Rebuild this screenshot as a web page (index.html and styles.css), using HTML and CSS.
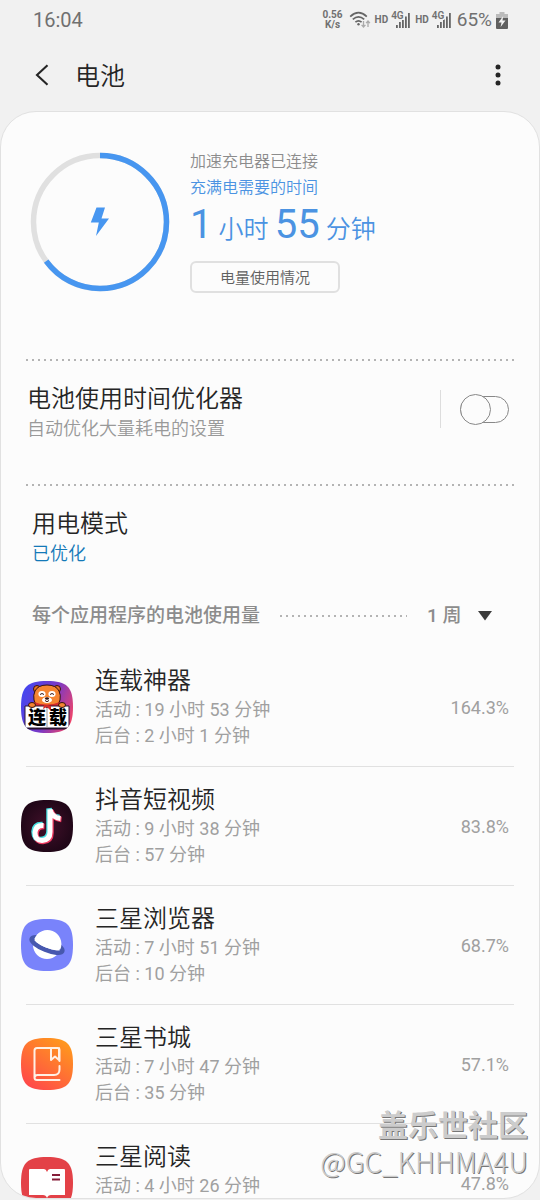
FILE: index.html
```html
<!DOCTYPE html>
<html lang="zh-CN">
<head>
<meta charset="utf-8">
<meta name="viewport" content="width=device-width, initial-scale=1">
<title>电池</title>
<link rel="stylesheet" href="styles.css">
</head>
<body>
<div class="status-bar">
  <time class="clock">16:04</time>
  <div class="status-icons">
    <span class="speed"><span>0.56</span><span>K/s</span></span>
    <svg class="wifi" width="22" height="18" viewBox="0 0 22 18" fill="none" stroke="#666" stroke-width="1.7">
      <path d="M1.2 5.6Q9.5-2.2 17.8 5.6M3.8 8.4Q9.5 3.2 15.2 8.4M6.4 11.2Q9.5 8.4 12.6 11.2"/>
      <circle cx="9.5" cy="13.3" r="1.2" fill="#666" stroke="none"/>
      <path d="M14.5 10v6M12.6 13.8l1.9 2.2 1.9-2.2M19 16v-6M17.1 12.2 19 10l1.9 2.2" stroke="#aaa" stroke-width="1.3"/>
    </svg>
    <span class="hd">HD</span>
    <span class="cell"><span class="net">4G</span>
      <svg width="14" height="15" viewBox="0 0 14 15" fill="#666"><path d="M0 12h1.8v3H0zM3 9h1.8v6H3zM6 6.5h1.8V15H6zM9 3.5h1.8V15H9zM12 0h1.8v15H12z"/></svg></span>
    <span class="hd">HD</span>
    <span class="cell"><span class="net">4G</span>
      <svg width="14" height="15" viewBox="0 0 14 15" fill="#666"><path d="M0 12h1.8v3H0zM3 9h1.8v6H3zM6 6.5h1.8V15H6zM9 3.5h1.8V15H9zM12 0h1.8v15H12z"/></svg></span>
    <span class="charge">65%</span>
    <svg class="battery" width="12" height="17" viewBox="0 0 12 17">
      <path d="M3.500 0h5v2H12v5H0V2h3.500z" fill="#bbb"/><path d="M0 6h12v10q0 1-1 1H1q-1 0-1-1z" fill="#606060"/>
      <path d="M7.200 4 2.500 10.500h3L4.600 15 9.500 8.500h-3z" fill="#f3f3f3"/>
    </svg>
  </div>
</div>
<header class="title-bar">
  <button class="icon-button" type="button" aria-label="返回">
    <svg width="14" height="22" viewBox="0 0 14 22" fill="none" stroke="#252525" stroke-width="2.100"><path d="M12.500 1.200 2 11l10.500 9.800"/></svg>
  </button>
  <h1>电池</h1>
  <button class="icon-button more" type="button" aria-label="更多选项">
    <svg width="6" height="22" viewBox="0 0 6 22" fill="#252525"><circle cx="3" cy="3" r="2.500"/><circle cx="3" cy="11" r="2.500"/><circle cx="3" cy="19" r="2.500"/></svg>
  </button>
</header>
<main class="card">
  <section class="summary">
    <svg class="gauge" width="140" height="140" viewBox="0 0 140 140" fill="none">
      <circle cx="70" cy="70" r="66.500" stroke="#e0e0e0" stroke-width="5.500"/>
      <circle cx="70" cy="70" r="66.500" stroke="#4796f0" stroke-width="5.500" pathLength="100" stroke-dasharray="65 35" transform="rotate(-90 70 70)"/>
      <path d="M66.500 55.500h8.500l-3.500 11h7.500L66 84l2.800-13.500h-8z" fill="#4796f0"/>
    </svg>
    <div class="summary-text">
      <p class="charger">加速充电器已连接</p>
      <p class="until">充满电需要的时间</p>
      <p class="remaining"><b>1</b> 小时 <b>55</b> 分钟</p>
      <button class="usage-button" type="button">电量使用情况</button>
    </div>
  </section>
  <section class="optimizer dotted-top">
    <label class="optimizer-label" for="optimizer">
      <span class="item-title">电池使用时间优化器</span>
      <span class="item-sub">自动优化大量耗电的设置</span>
    </label>
    <div class="switch-box"><input class="switch" id="optimizer" type="checkbox" role="switch"></div>
  </section>
  <section class="mode dotted-top">
    <h2 class="item-title">用电模式</h2>
    <p class="item-sub mode-value">已优化</p>
  </section>
  <div class="usage-head">
    <label for="period">每个应用程序的电池使用量</label>
    <span class="leader"></span>
    <span class="period">
      <select id="period"><option>1 周</option></select>
      <svg width="14" height="10" viewBox="0 0 14 10"><path d="M0 0h14L7 9.500z" fill="#3c3c3c"/></svg>
    </span>
  </div>
  <ul class="apps">
    <li class="app">
      <svg class="app-icon" viewBox="0 0 52 52">
        <defs>
          <linearGradient id="novel" x1="0" y1="0.300" x2="1" y2="0.700"><stop offset="0" stop-color="#4546ef"/><stop offset=".55" stop-color="#7b38c4"/><stop offset="1" stop-color="#f04468"/></linearGradient>
          <clipPath id="squircle"><path d="M26 0C46 0 52 6 52 26S46 52 26 52 0 46 0 26 6 0 26 0z"/></clipPath>
        </defs>
        <g clip-path="url(#squircle)">
          <path d="M0 0h52v52H0z" fill="url(#novel)"/>
          <g stroke="#35130e" stroke-width="1">
            <circle cx="16" cy="8" r="3.500" fill="#e97025"/><circle cx="36" cy="8" r="3.500" fill="#e97025"/>
            <path d="M14 10Q17 4 26 4t12 6q2 4 1 9-1 7-13 7T13 19q-1-5 1-9z" fill="#f58532"/>
          </g>
          <ellipse cx="21" cy="13" rx="3.600" ry="3" fill="#fff"/><ellipse cx="31" cy="13" rx="3.600" ry="3" fill="#fff"/><ellipse cx="26" cy="19" rx="5" ry="3" fill="#fff"/>
          <path d="M19 13.500q2-2 4 0M29 13.500q2-2 4 0M24 19.500l2 1.200 2-1.200" fill="none" stroke="#32120e"/><ellipse cx="26" cy="17.500" rx="2" ry="1.200" fill="#32120e"/>
          <path d="M13 21q13 5 26 0v4q-13 3-26 0z" fill="#d52d2a"/>
          <path d="M4 25h19q3 0 3 2 0-2 3-2h19v22H4z" fill="#fff" stroke="#2b1738"/>
          <path d="M4 47h44v1.500H4z" fill="#25132c"/><path d="M26 27v20" stroke="#999"/>
          <path d="m23 24-1 4 4-2 4 4v-5z" fill="#d52d2a"/>
          <g fill="#f58532" stroke="#35130e"><ellipse cx="11" cy="24" rx="3.500" ry="2.500"/><ellipse cx="41" cy="24" rx="3.500" ry="2.500"/></g>
          <text class="icon-text" x="7" y="43">连</text><text class="icon-text" x="28" y="43">载</text>
        </g>
      </svg>
      <div class="app-info"><h3 class="item-title">连载神器</h3><p>活动 : 19 小时 53 分钟</p><p>后台 : 2 小时 1 分钟</p></div>
      <span class="percent">164.3%</span>
    </li>
    <li class="app">
      <svg class="app-icon" viewBox="0 0 52 52">
        <defs><radialGradient id="video"><stop offset="0" stop-color="#42102a"/><stop offset="1" stop-color="#210718"/></radialGradient></defs>
        <path d="M26 0C46 0 52 6 52 26S46 52 26 52 0 46 0 26 6 0 26 0z" fill="url(#video)"/>
        <g fill="none" stroke-width="5.500">
          <path d="M21.500 24.500q-8-.5-8.500 7 0 8 7 8 8-.5 8-8.500V8.500q2 8 10.500 9" stroke="#46dfe1"/>
          <path d="M23.500 26.500q-8-.5-8.500 7 0 8 7 8 8-.5 8-8.500V10.500q2 8 10.500 9" stroke="#f03b62"/>
          <path d="M22.500 25.500q-8-.5-8.500 7 0 8 7 8 8-.5 8-8.500V9.500q2 8 10.500 9" stroke="#fff" stroke-width="5"/>
        </g>
      </svg>
      <div class="app-info"><h3 class="item-title">抖音短视频</h3><p>活动 : 9 小时 38 分钟</p><p>后台 : 57 分钟</p></div>
      <span class="percent">83.8%</span>
    </li>
    <li class="app">
      <svg class="app-icon" viewBox="0 0 52 52">
        <path d="M26 0C46 0 52 6 52 26S46 52 26 52 0 46 0 26 6 0 26 0z" fill="#7983fb"/>
        <g transform="rotate(22 26 26)">
          <circle cx="26" cy="26" r="14" fill="#fff"/>
          <ellipse cx="26" cy="26" rx="16.500" ry="5" fill="none" stroke="#4758af" stroke-width="4.500"/>
          <path d="M12 25a14 14 0 0 1 28 0q-4 3.800-14 3.800T12 25z" fill="#fff"/>
        </g>
      </svg>
      <div class="app-info"><h3 class="item-title">三星浏览器</h3><p>活动 : 7 小时 51 分钟</p><p>后台 : 10 分钟</p></div>
      <span class="percent">68.7%</span>
    </li>
    <li class="app">
      <svg class="app-icon" viewBox="0 0 52 52">
        <defs><linearGradient id="books" x1=".15" y1="1" x2=".85" y2="0"><stop offset="0" stop-color="#ff454c"/><stop offset="1" stop-color="#ff9c1b"/></linearGradient></defs>
        <path d="M26 0C46 0 52 6 52 26S46 52 26 52 0 46 0 26 6 0 26 0z" fill="url(#books)"/>
        <path d="M38.500 23V12q0-2-2-2H16q-2.500 0-2.500 2.500v27q0 2.500 2.500 2.500h22.500M13.500 39.500Q14 37 16.500 37H33q5.500 0 5.500-5.500V28M30 10v12l4-3.500 4 3.500V10" fill="none" stroke="#fff0e5" stroke-width="2" stroke-linecap="round" stroke-linejoin="round"/>
      </svg>
      <div class="app-info"><h3 class="item-title">三星书城</h3><p>活动 : 7 小时 47 分钟</p><p>后台 : 35 分钟</p></div>
      <span class="percent">57.1%</span>
    </li>
    <li class="app">
      <svg class="app-icon" viewBox="0 0 52 52">
        <path d="M26 0C46 0 52 6 52 26S46 52 26 52 0 46 0 26 6 0 26 0z" fill="#e34147"/>
        <path d="M9 12h14q2 0 3 3 1-3 3-3h14q1 0 1 1v25H30q-3 0-4 3-1-3-4-3H8V13q0-1 1-1z" fill="#fff"/>
        <path d="M31 18h8M31 22.500h8" stroke="#851d39" stroke-width="2"/>
      </svg>
      <div class="app-info"><h3 class="item-title">三星阅读</h3><p>活动 : 4 小时 26 分钟</p></div>
      <span class="percent">47.8%</span>
    </li>
  </ul>
</main>
<div class="watermark"><span class="community">盖乐世社区</span><span class="author">@GC_KHHMA4U</span></div>
</body>
</html>
```
FILE: styles.css
```css
* { box-sizing: border-box; }

body {
  margin: 0;
  height: 100vh;
  display: flex;
  flex-direction: column;
  position: relative;
  overflow: hidden;
  background: #f1f1f1;
  color: #252525;
  font-family: Roboto, "Noto Sans CJK SC", sans-serif;
  font-weight: 350;
}

h1, h2, h3, p, ul { margin: 0; padding: 0; font-weight: inherit; }
button, select { font: inherit; color: inherit; }
svg { flex: none; display: block; }

.status-bar {
  flex: none;
  height: 40px;
  padding: 0 32px 0 33px;
  display: flex;
  align-items: center;
  justify-content: space-between;
  color: #707070;
  font-weight: 400;
}
.clock { font-size: 20px; line-height: 24px; }
.status-icons { display: flex; align-items: center; }
.speed {
  display: flex;
  flex-direction: column;
  align-items: center;
  margin-right: 6px;
  font-size: 10px;
  line-height: 10px;
  font-weight: 700;
}
.wifi { margin-right: 4px; }
.hd { font-size: 10px; font-weight: 700; line-height: 16px; }
.cell {
  display: flex;
  align-items: flex-end;
  justify-content: flex-end;
  position: relative;
  width: 19px;
  height: 16px;
  margin: 0 5px 0 3px;
}
.net {
  position: absolute;
  left: 0;
  top: 0;
  background: #f1f1f1;
  font-size: 10px;
  line-height: 8px;
  font-weight: 600;
}
.charge { margin: 0 4px 0 1px; font-size: 19px; line-height: 24px; }

.title-bar {
  flex: none;
  height: 71px;
  padding: 0 30px 2px 24px;
  display: flex;
  align-items: center;
}
.icon-button {
  display: flex;
  justify-content: center;
  width: 36px;
  padding: 8px 0;
  border: 0;
  background: none;
}
.more { width: 24px; margin-left: auto; }
h1 { margin-left: 15px; padding-top: 4px; font-size: 25px; line-height: 36px; }

.card {
  flex: 1;
  min-height: 0;
  margin-bottom: 1px;
  padding: 0 25px;
  overflow: hidden;
  border: 1px solid #e1e1e1;
  border-radius: 36px;
  background: #fcfcfc;
}

.summary {
  display: flex;
  gap: 20px;
  height: 247px;
  padding: 40px 0 0 4px;
}
.charger, .until { font-size: 16px; line-height: 26px; }
.charger { margin-top: -3px; color: #8c8c8c; }
.until, .remaining { color: #4b93e2; }
.remaining { margin-bottom: 7px; font-size: 25px; line-height: 48px; white-space: nowrap; }
.remaining b { font-size: 40px; font-weight: 400; line-height: 48px; }
.usage-button {
  display: block;
  width: 150px;
  height: 32px;
  padding: 0 0 2px;
  border: 2px solid #e0e0e0;
  border-radius: 6px;
  background: #fcfcfc;
  color: #606060;
  font-size: 15px;
}

.dotted-top::before {
  content: "";
  position: absolute;
  inset: 0 0 auto;
  height: 2px;
  background: radial-gradient(circle at 1px 1px, #b4b4b4 1px, transparent 1px) 0 0 / 6px 2px;
}
.optimizer, .mode { position: relative; }
.optimizer {
  display: flex;
  justify-content: space-between;
  height: 125px;
  padding: 22px 5px 0 1px;
}
.item-title { display: block; font-size: 24px; line-height: 36px; }
.item-sub { display: block; font-size: 18px; line-height: 24px; color: #999; }
.switch-box {
  display: flex;
  align-items: center;
  height: 38px;
  margin-top: 9px;
  padding-left: 19px;
  border-left: 1px solid #ddd;
}
.switch {
  appearance: none;
  display: flex;
  align-items: center;
  width: 49px;
  height: 27px;
  margin: 0;
  border: 1px solid #888;
  border-radius: 14px;
}
.switch::before {
  content: "";
  width: 29px;
  height: 29px;
  margin-left: -1px;
  flex: none;
  border: 1px solid #888;
  border-radius: 50%;
  background: #fcfcfc;
}
.switch:checked { justify-content: flex-end; background: #4796f0; }
.mode { padding: 22px 6px 0; }
.mode-value { color: #1479b8; }

.usage-head {
  display: flex;
  align-items: center;
  margin-top: 38px;
  padding: 0 22px 0 6px;
  font-size: 19px;
  line-height: 24px;
  font-weight: 500;
  color: #8c8c8c;
}
.leader {
  flex: 1;
  height: 2px;
  margin: 0 20px;
  background: radial-gradient(circle at 1px 1px, #b4b4b4 1px, transparent 1px) 0 0 / 6px 2px;
}
.period { display: flex; align-items: center; gap: 16px; }
.period select {
  appearance: none;
  padding: 0;
  border: 0;
  background: none;
}

.apps { margin-top: 20px; list-style: none; }
.app {
  display: flex;
  align-items: flex-start;
  height: 119px;
  padding: 17px 5px 0 0;
  border-bottom: 1px solid #e1e1e1;
}
.app-icon { width: 52px; height: 52px; margin: 16px 22px 0 -5px; }
.app-info { flex: 1; font-size: 18px; line-height: 26px; font-weight: 400; color: #a0a0a0; }
.app-info .item-title { line-height: 32px; font-weight: 350; color: #252525; }
.percent { margin-top: 30px; font-size: 18px; line-height: 26px; font-weight: 400; color: #a0a0a0; }
.icon-text { font-family: "Noto Sans CJK SC", sans-serif; font-size: 18px; font-weight: 900; }

.watermark {
  position: absolute;
  right: 12px;
  bottom: 20px;
  display: flex;
  flex-direction: column;
  align-items: flex-end;
  color: #ccc;
  text-shadow: 1px 1px 0 #777;
  font-family: "Noto Sans CJK SC", sans-serif;
}
.community { font-size: 30px; line-height: 38px; font-weight: 700; }
.author { font-size: 28px; line-height: 38px; font-weight: 300; }
```
